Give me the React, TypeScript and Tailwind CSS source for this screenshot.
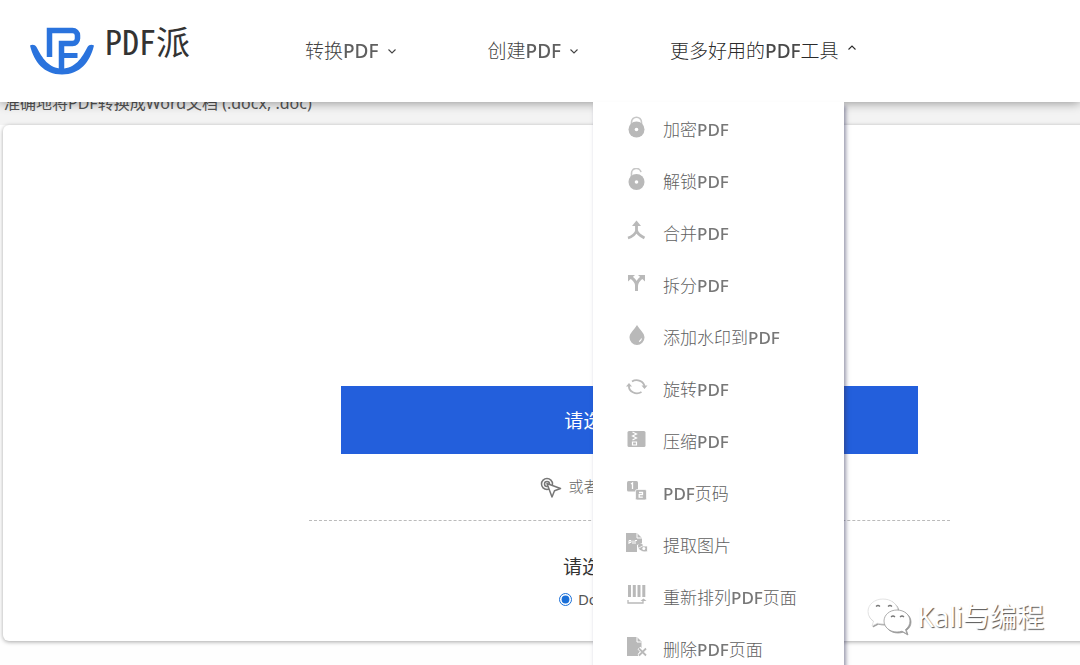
import React, { useState } from 'react';

interface Tool {
  label: string;
  icon: React.ReactNode;
}

const tools: Tool[] = [
  {
    label: '加密PDF',
    icon: (
      <>
        <path d="M5.500 9V6.200a5 5 0 0 1 10 0V9" fill="none" stroke="currentColor" strokeWidth="1.600" opacity=".8" />
        <circle cx="10.500" cy="13.500" r="8" />
        <circle cx="10.500" cy="13.500" r="1.800" fill="#fff" />
      </>
    ),
  },
  {
    label: '解锁PDF',
    icon: (
      <>
        <path d="M5.500 8.500V5.200a4.800 4.800 0 0 1 9.500-1" fill="none" stroke="currentColor" strokeWidth="1.600" opacity=".8" />
        <circle cx="10.500" cy="14" r="8" />
        <circle cx="10.500" cy="14" r="1.800" fill="#fff" />
      </>
    ),
  },
  {
    label: '合并PDF',
    icon: (
      <>
        <path d="M10.500 3v7.500c0 3-5 6.500-8.500 7.500M10.500 10.500c1 3.500 4 5.500 8 7.500" fill="none" stroke="currentColor" strokeWidth="2.800" />
        <path d="M10.500 0.500 15 6H6z" />
      </>
    ),
  },
  {
    label: '拆分PDF',
    icon: (
      <>
        <path d="M10.500 19v-6c0-3-3-6-6.500-8.500M10.500 14c0-4 3-7 6.500-9.500" fill="none" stroke="currentColor" strokeWidth="3" />
        <path d="M2 3h7L2 9.500zM19 3h-7l7 6.500z" />
      </>
    ),
  },
  {
    label: '添加水印到PDF',
    icon: (
      <>
        <path d="M11 1c3 5 7.500 8 7.500 12.500a7.500 7.500 0 0 1-15 0C3.500 9 8 6 11 1z" />
        <path d="M15.500 14.500c-.3 1.500-1.200 2.500-2.500 3" fill="none" stroke="#fff" strokeWidth="1.200" />
      </>
    ),
  },
  {
    label: '旋转PDF',
    icon: (
      <>
        <path d="M6 5.500a8 7 0 0 1 12.500 5M3 9.500a8 7 0 0 0 12.500 6.500" fill="none" stroke="currentColor" strokeWidth="1.800" />
        <path d="M15.500 9.500h6L18.500 13zM0 10.500h6L3 7z" />
      </>
    ),
  },
  {
    label: '压缩PDF',
    icon: (
      <>
        <rect x="1.500" y="3" width="18" height="16" rx="1.500" />
        <path d="m6.500 4 4 2-4 2 4 2-4 2M6.500 14h4v3h-4z" fill="none" stroke="#fff" strokeWidth="1.200" />
      </>
    ),
  },
  {
    label: 'PDF页码',
    icon: (
      <>
        <rect x="1" y="1" width="11" height="10.500" rx="1.500" />
        <rect x="9.500" y="9.500" width="11" height="10.500" rx="1.500" stroke="#fff" strokeWidth=".7" />
        <path d="m5 4 1.500-1v6M13 12.500h3.500v2.200H13.200v2.500h3.600" fill="none" stroke="#fff" strokeWidth="1.300" />
      </>
    ),
  },
  {
    label: '提取图片',
    icon: (
      <>
        <path d="M0 1h11l5 5v5l-5 2v7H0z" />
        <path d="M11 1v5h5M3 12V8.500h2v2H3M7 8.500V12M9 12V8.500h2" fill="none" stroke="#fff" strokeWidth="1" />
        <circle cx="14.500" cy="14" r="2.500" />
        <path d="M12 16.500c3 3 6 4 9.500 3V14h-5z" stroke="#fff" strokeWidth=".8" />
        <circle cx="17.800" cy="16.500" r="1.500" fill="#fff" />
      </>
    ),
  },
  {
    label: '重新排列PDF页面',
    icon: (
      <>
        <path d="M2 1h3v12H2zM6.800 1h3v12h-3zM11.500 1h3v12h-3zM16.300 1h3v12h-3z" />
        <path d="M2 16v3h15v-2.500" fill="none" stroke="currentColor" strokeWidth="1.300" />
        <path d="M14.500 17 17.500 14.500l3 2.500z" />
      </>
    ),
  },
  {
    label: '删除PDF页面',
    icon: (
      <>
        <path d="M1 1h10l4.500 4.500V12L12 20H1z" />
        <path d="M11 1v5h4.500" fill="none" stroke="#fff" strokeWidth="1" />
        <path d="m13 12 7 7.500M20 12l-7 7.500" stroke="#fff" strokeWidth="4" />
        <path d="m13 12.500 7 7M20 12.500l-7 7" stroke="currentColor" strokeWidth="1.800" />
      </>
    ),
  },
];

const formats = ['Docx', 'Doc'];

// Latin words are set a little heavier than the Chinese around them
const Mixed: React.FC<{ text: string }> = ({ text }) => (
  <span>
    {text.split(/(PDF)/).map((part, i) =>
      part === 'PDF' ? <span key={i} className="font-medium opacity-85">{part}</span> : part
    )}
  </span>
);

const Chevron: React.FC<{ up?: boolean }> = ({ up }) => (
  <svg viewBox="0 0 10 10" className={up ? 'w-2.5 h-2.5 mb-1.5' : 'w-2.5 h-2.5'} fill="none" stroke="currentColor" strokeWidth="1.1">
    <path d={up ? 'M1.500 6.500 5 3l3.500 3.500' : 'M1.500 3.500 5 7l3.500-3.500'} />
  </svg>
);

const Logo = () => (
  <a href="#" className="flex items-center gap-[11px]">
    <svg viewBox="0 0 64 48" className="w-16 h-12" fill="none" stroke="#2a73dd">
      <path d="M19.500 30V3.500H42.500a5 5 0 0 1 5 5v3a5 5 0 0 1-5 5H31.500V45" strokeWidth="5.500" />
      <path d="M33 28.500h14.500" strokeWidth="5" />
      <path d="M0 18.500c2.500-1.200 5-.8 6.500 1.500C12 31 19 41.500 32 41.500s20-10.500 25.500-21.500c1.500-2.300 4-2.700 6.500-1.500C60 35 50 47.500 32 47.500S4 35 0 18.500z" fill="#2a73dd" stroke="none" />
    </svg>
    <span className="mb-5 font-['Noto_Sans_Mono_CJK_SC','Noto_Sans_CJK_SC',sans-serif] text-[34px] leading-9 font-medium text-[#333]">PDF派</span>
  </a>
);

const App: React.FC = () => {
  const [open, setOpen] = useState(true);
  const [format, setFormat] = useState('Docx');

  return (
    <div className="relative min-h-screen overflow-hidden bg-[#fefefe] font-['Noto_Sans','Noto_Sans_CJK_SC',sans-serif] font-light text-[#555]">
      <header className="relative z-10 flex h-[102px] bg-white pl-[30px] shadow-[0_1px_10px_rgba(0,0,0,0.4)]">
        <Logo />
        <nav className="ml-[115px] flex gap-[91px] text-[19px] text-[#444]">
          <button type="button" className="flex items-center gap-2">
            <Mixed text="转换PDF" />
            <Chevron />
          </button>
          <button type="button" className="flex items-center gap-2">
            <Mixed text="创建PDF" />
            <Chevron />
          </button>
          <div className="relative flex">
            <button
              type="button"
              aria-expanded={open}
              onClick={() => setOpen(!open)}
              className="flex items-center gap-2 whitespace-nowrap text-[#2a2a2a]"
            >
              <Mixed text="更多好用的PDF工具" />
              <Chevron up={open} />
            </button>
            {open && (
              <ul className="absolute top-full -left-[77px] w-[251px] bg-white pt-0.5 pb-6 text-[17px] text-[#606060] shadow-[2px_4px_4px_rgba(50,50,90,0.5)]">
                {tools.map((tool) => (
                  <li key={tool.label}>
                    <a href="#" className="flex h-13 items-center gap-[15px] pl-[33px] hover:bg-gray-50">
                      <svg viewBox="0 0 22 22" className="mb-1.5 w-[22px] h-[22px] text-[#b9b9b9]" fill="currentColor">
                        {tool.icon}
                      </svg>
                      <Mixed text={tool.label} />
                    </a>
                  </li>
                ))}
              </ul>
            )}
          </div>
        </nav>
      </header>

      <main className="-mt-[11px]">
        <div className="bg-[#f3f3f3] pb-2.5">
          <p className="pl-1 text-base leading-6 font-normal text-[#555]">准确地将PDF转换成Word文档 (.docx, .doc)</p>
        </div>
        <section className="ml-[3px] flex w-[116%] flex-col items-center rounded-md bg-white pt-[261px] pb-[30px] shadow-[0_1px_4px_rgba(0,0,0,0.35)]">
          <div className="flex w-[641px] flex-col items-center border-b border-dashed border-[#bbb] pb-[22px]">
            <button type="button" className="h-[68px] w-9/10 bg-[#235fdc] pt-0.5 text-[19px] font-normal text-white">
              请选择PDF文件
            </button>
            <p className="mt-5 flex h-6 items-center gap-1.5 text-[15px] text-[#666]">
              <svg viewBox="0 0 22 22" className="mt-1 w-[22px] h-[22px]" fill="none" stroke="#777" strokeWidth="1.500">
                <circle cx="7" cy="7" r="5.500" />
                <circle cx="7" cy="7" r="2.500" />
                <path d="m7 6.500 13.500 5-6 2.300-2.500 6.200z" fill="#fff" strokeLinejoin="round" />
              </svg>
              或者将文件拖放到这里
            </p>
          </div>
          <fieldset>
            <legend className="pt-8 text-[19px] leading-7 font-normal text-[#333]">请选择输出格式</legend>
            <div className="-ml-1 mt-1.5 flex h-6 items-center gap-6 text-[15px]">
              {formats.map((f) => (
                <label key={f} className="flex items-center gap-1.5 font-normal">
                  <input
                    type="radio"
                    name="format"
                    value={f}
                    checked={format === f}
                    onChange={() => setFormat(f)}
                    className="m-0 h-[13px] w-[13px] accent-[#1a6fd8]"
                  />
                  {f}
                </label>
              ))}
            </div>
          </fieldset>
        </section>
      </main>

      {/* account badge floating over the page */}
      <div className="absolute right-9 bottom-7 z-20 flex items-center gap-1.5 text-[27px] leading-10 font-normal text-white [text-shadow:1px_1px_1px_#555]">
        <svg viewBox="0 0 44 38" className="w-11 h-[38px] drop-shadow-[1px_1px_0_#999]" fill="#fff" stroke="#ddd" strokeWidth=".8">
          <path d="M16 1C7.500 1 1 6.500 1 13.500c0 4 2.200 7.500 5.500 9.700L5 28l5.500-2.800c1.700.5 3.500.8 5.500.8 8.500 0 15-5.500 15-12.500S24.500 1 16 1z" />
          <path d="M30 12c-7.500 0-13 5-13 11s5.500 11 13 11c1.800 0 3.400-.3 5-.8l5 2.800-1.500-4.500c2.800-2 4.500-5 4.500-8.500 0-6-5.500-11-13-11z" stroke="#999" />
          <path d="M9 8.500q2-2 4 0M21 8.500q2-2 4 0M24 19q2-2 4 0M33 19q2-2 4 0" fill="none" stroke="#777" strokeWidth="1.200" />
        </svg>
        Kali与编程
      </div>
    </div>
  );
};

export default App;
